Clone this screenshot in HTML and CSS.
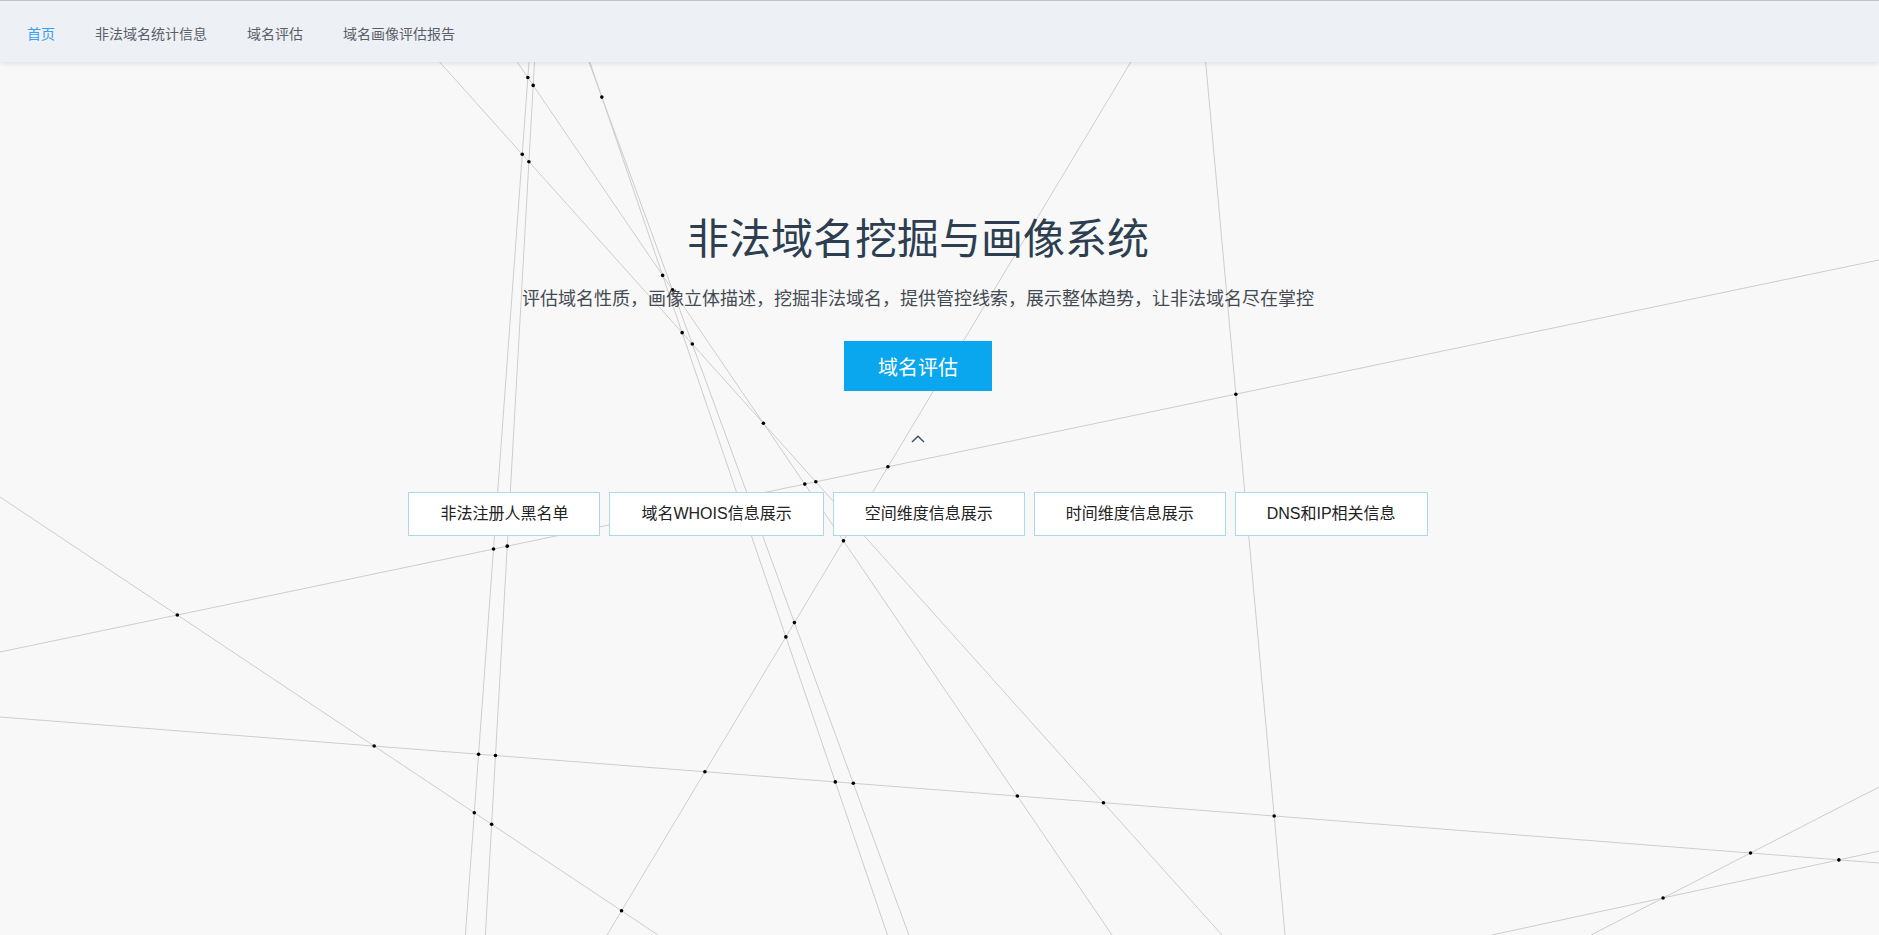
FILE: index.html
```html
<!DOCTYPE html>
<html lang="zh-CN">
<head>
<meta charset="utf-8">
<title>非法域名挖掘与画像系统</title>
<link rel="stylesheet" href="styles.css">
</head>
<body>
<svg class="bg" id="bg" width="1879" height="935" viewBox="0 0 1879 935">
  <g class="lines">
    <line x1="0" y1="652" x2="1879" y2="260"/>
    <line x1="0" y1="717" x2="1879" y2="863"/>
    <line x1="0" y1="497" x2="658" y2="935"/>
    <line x1="1168" y1="0" x2="607" y2="935"/>
    <line x1="1200" y1="0" x2="1285" y2="935"/>
    <line x1="1879" y1="787" x2="1591" y2="935"/>
    <line x1="1879" y1="851.2" x2="1492" y2="935"/>
    <line x1="384" y1="0" x2="1222" y2="935"/>
    <line x1="475" y1="0" x2="1112" y2="935"/>
    <line x1="568.74" y1="0" x2="887.5" y2="935"/>
    <line x1="566.26" y1="0" x2="908.9" y2="935"/>
    <line x1="533.5" y1="0" x2="465.4" y2="935"/>
    <line x1="538" y1="0" x2="485.4" y2="935"/>
  </g>
  <g class="dots" id="dots"></g>
</svg>

<header class="topbar">
  <nav class="nav">
    <a class="nav-item active">首页</a>
    <a class="nav-item">非法域名统计信息</a>
    <a class="nav-item">域名评估</a>
    <a class="nav-item">域名画像评估报告</a>
  </nav>
</header>

<main class="hero">
  <h1 class="title">非法域名挖掘与画像系统</h1>
  <p class="subtitle">评估域名性质，画像立体描述，挖掘非法域名，提供管控线索，展示整体趋势，让非法域名尽在掌控</p>
  <a class="cta">域名评估</a>
  <svg class="caret" width="14" height="8" viewBox="0 0 14 8"><polyline points="1,7 7,1.2 13,7"/></svg>
  <div class="tabs">
    <a class="tab">非法注册人黑名单</a>
    <a class="tab">域名WHOIS信息展示</a>
    <a class="tab">空间维度信息展示</a>
    <a class="tab">时间维度信息展示</a>
    <a class="tab">DNS和IP相关信息</a>
  </div>
</main>
<script src="script.js"></script>
</body>
</html>
```

FILE: styles.css
```css
html, body {
  margin: 0;
  padding: 0;
}
body {
  background: #f8f8f8;
  font-family: "Liberation Sans", "Noto Sans CJK SC", sans-serif;
  width: 1879px;
  height: 935px;
  overflow: hidden;
  position: relative;
}
.bg {
  position: absolute;
  left: 0;
  top: 0;
  z-index: 0;
}
.lines line {
  stroke: #cdcdcd;
  stroke-width: 1;
}
.dots circle {
  fill: #000;
}
.topbar {
  position: relative;
  z-index: 2;
  border-top: 1px solid #c3c3c3;
  background: #edf0f5;
  height: 61px;
  box-shadow: 0 2px 5px rgba(0, 0, 0, 0.09);
}
.nav {
  display: flex;
  align-items: center;
  height: 100%;
  padding: 2px 0 0 7px;
  box-sizing: border-box;
}
.nav-item {
  padding: 0 20px;
  font-size: 14px;
  color: #5a5f68;
  text-decoration: none;
  cursor: pointer;
}
.nav-item.active {
  color: #3a9ff0;
}
.hero {
  position: relative;
  z-index: 1;
  width: 1836px;
  display: flex;
  flex-direction: column;
  align-items: center;
}
.title {
  margin: 153px 0 0;
  font-size: 42px;
  line-height: 50px;
  font-weight: normal;
  color: #2d3e50;
}
.subtitle {
  margin: 21px 0 0;
  font-size: 18px;
  line-height: 26px;
  color: #444a52;
}
.cta {
  margin-top: 29px;
  width: 148px;
  height: 50px;
  background: #0aa6ee;
  color: #fff;
  font-size: 20px;
  display: flex;
  align-items: center;
  justify-content: center;
  cursor: pointer;
}
.caret {
  margin-top: 44px;
  display: block;
}
.caret polyline {
  fill: none;
  stroke: #3d4f66;
  stroke-width: 1.4;
}
.tabs {
  margin-top: 49px;
  display: flex;
  gap: 9px;
}
.tab {
  background: #fff;
  border: 1px solid #a8d8ea;
  padding: 0 31px;
  height: 42px;
  line-height: 42px;
  font-size: 16px;
  color: #222;
  cursor: pointer;
}
```

FILE: script.js
```js
(function () {
  var ns = 'http://www.w3.org/2000/svg';
  var svg = document.getElementById('bg');
  var g = document.getElementById('dots');
  var els = svg.querySelectorAll('.lines line');
  var segs = [];
  for (var k = 0; k < els.length; k++) {
    var l = els[k];
    segs.push([+l.getAttribute('x1'), +l.getAttribute('y1'), +l.getAttribute('x2'), +l.getAttribute('y2')]);
  }
  for (var i = 0; i < segs.length; i++) {
    for (var j = i + 1; j < segs.length; j++) {
      var a = segs[i], b = segs[j];
      var rx = a[2] - a[0], ry = a[3] - a[1];
      var sx = b[2] - b[0], sy = b[3] - b[1];
      var den = rx * sy - ry * sx;
      if (Math.abs(den) < 1e-9) continue;
      var qx = b[0] - a[0], qy = b[1] - a[1];
      var t = (qx * sy - qy * sx) / den;
      var u = (qx * ry - qy * rx) / den;
      if (t < 0 || t > 1 || u < 0 || u > 1) continue;
      var c = document.createElementNS(ns, 'circle');
      c.setAttribute('cx', (a[0] + t * rx).toFixed(2));
      c.setAttribute('cy', (a[1] + t * ry).toFixed(2));
      c.setAttribute('r', '1.8');
      g.appendChild(c);
    }
  }
})();
```
